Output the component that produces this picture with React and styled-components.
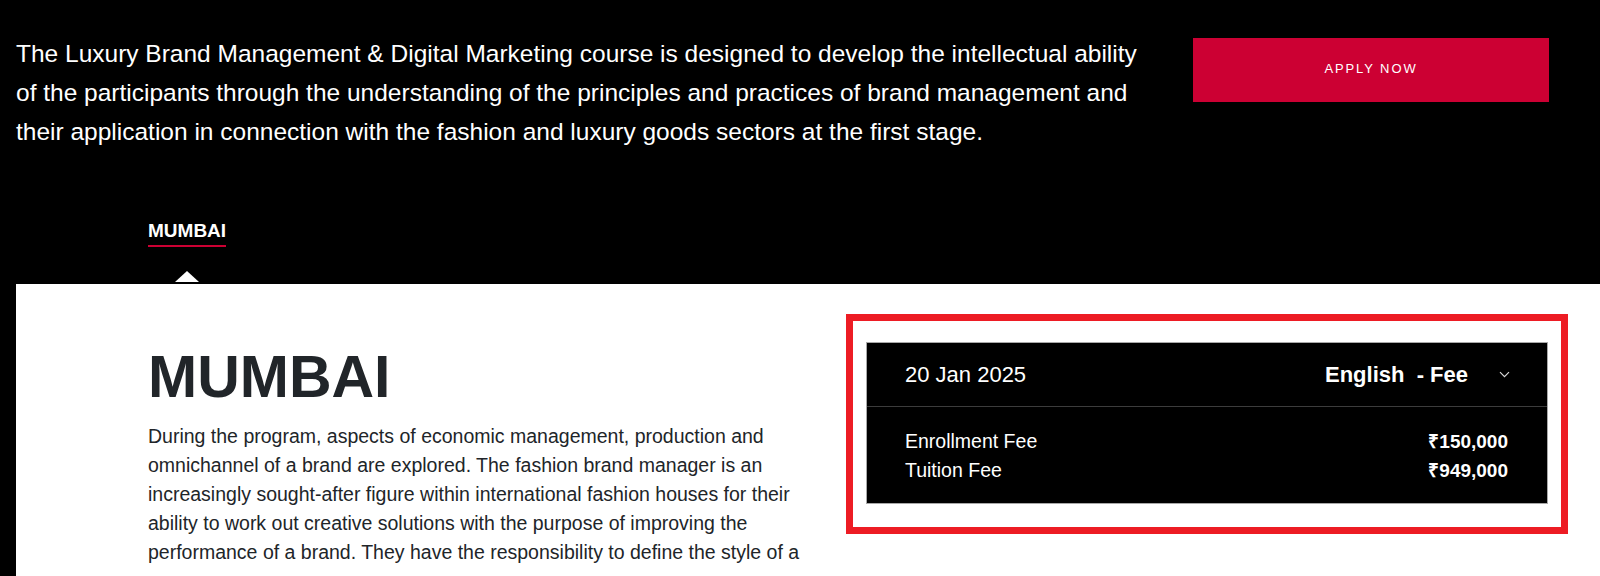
import React from 'react';
import styled, { createGlobalStyle } from 'styled-components';

const GlobalStyle = createGlobalStyle`
  * {
    box-sizing: border-box;
  }

  body {
    margin: 0;
    background: #000;
    font-family: "Liberation Sans", Arial, Helvetica, sans-serif;
  }
`;

const Page = styled.div`
  background: #000;
  min-height: 576px;
  overflow: hidden;
`;

const Hero = styled.section`
  display: flex;
  justify-content: space-between;
  align-items: flex-start;
  padding: 34px 51px 0 16px;
`;

const HeroText = styled.p`
  margin: 0;
  width: 1140px;
  color: #fff;
  font-size: 24.5px;
  line-height: 39px;
`;

const ApplyButton = styled.button`
  flex: none;
  width: 356px;
  height: 64px;
  margin-top: 4px;
  padding: 0 0 3px;
  border: none;
  background: #cc0033;
  color: #fff;
  font-family: inherit;
  font-size: 13px;
  letter-spacing: 1.9px;
  text-transform: uppercase;
  cursor: pointer;
`;

const Tabs = styled.nav`
  display: flex;
  padding: 69px 0 37px 148px;
`;

const Tab = styled.span`
  position: relative;
  color: #fff;
  font-size: 19px;
  font-weight: bold;
  line-height: 22px;
  padding-bottom: 3px;
  border-bottom: 2px solid ${(p) => (p.active ? '#cc0033' : 'transparent')};

  &::after {
    content: '';
    display: ${(p) => (p.active ? 'block' : 'none')};
    position: absolute;
    left: 50%;
    top: calc(100% + 26px);
    transform: translateX(-50%);
    border-left: 12px solid transparent;
    border-right: 12px solid transparent;
    border-bottom: 11px solid #fff;
  }
`;

const Content = styled.section`
  display: grid;
  grid-template-columns: 660px 722px;
  column-gap: 38px;
  align-items: start;
  margin-left: 16px;
  min-height: 292px;
  padding: 30px 32px 0 132px;
  background: #fff;
`;

const Intro = styled.div`
  padding-top: 30px;
  color: #212529;
`;

const CityTitle = styled.h2`
  margin: 0;
  font-size: 59px;
  font-weight: bold;
  line-height: 66px;
`;

const Description = styled.p`
  margin: 12px 0 0;
  font-size: 19.5px;
  line-height: 29px;
`;

const FeeFrame = styled.div`
  border: 7px solid #ed1c24;
  padding: 21px 13px 23px;
`;

const FeeCard = styled.div`
  background: #000;
  border: 1px solid #a8a8a8;
  color: #fff;
`;

const CardHeader = styled.div`
  display: flex;
  justify-content: space-between;
  align-items: center;
  height: 64px;
  padding: 0 37px 0 38px;
  border-bottom: 1px solid #3c3c3c;
`;

const StartDate = styled.span`
  font-size: 22px;
`;

const LanguageSelect = styled.div`
  display: flex;
  align-items: center;
  gap: 31px;
  font-size: 22px;
  font-weight: bold;
  white-space: pre;
`;

const FeeList = styled.div`
  padding: 20px 39px 18px 38px;
`;

const FeeRow = styled.div`
  display: flex;
  justify-content: space-between;
  font-size: 19.5px;
  line-height: 29px;
`;

const FeeValue = styled.span`
  font-size: 19px;
  font-weight: bold;
`;

const Chevron = () => (
  <svg width="11" height="7" viewBox="0 0 11 7" fill="none">
    <path d="M1 1.2l4.5 4.5 4.5-4.5" stroke="#d8d8d8" strokeWidth="1.2" />
  </svg>
);

const fees = [
  { label: 'Enrollment Fee', value: '₹150,000' },
  { label: 'Tuition Fee', value: '₹949,000' },
];

const App = () => {
  return (
    <Page>
      <GlobalStyle />
      <Hero>
        <HeroText>
          The Luxury Brand Management &amp; Digital Marketing course is designed to develop the
          intellectual ability of the participants through the understanding of the principles and
          practices of brand management and their application in connection with the fashion and
          luxury goods sectors at the first stage.
        </HeroText>
        <ApplyButton>Apply Now</ApplyButton>
      </Hero>

      <Tabs>
        <Tab active>MUMBAI</Tab>
      </Tabs>

      <Content>
        <Intro>
          <CityTitle>MUMBAI</CityTitle>
          <Description>
            During the program, aspects of economic management, production and omnichannel of a
            brand are explored. The fashion brand manager is an increasingly sought-after figure
            within international fashion houses for their ability to work out creative solutions
            with the purpose of improving the performance of a brand. They have the responsibility
            to define the style of a
          </Description>
        </Intro>

        <FeeFrame>
          <FeeCard>
            <CardHeader>
              <StartDate>20 Jan 2025</StartDate>
              <LanguageSelect>
                <span>{'English  - Fee'}</span>
                <Chevron />
              </LanguageSelect>
            </CardHeader>
            <FeeList>
              {fees.map((fee) => (
                <FeeRow key={fee.label}>
                  <span>{fee.label}</span>
                  <FeeValue>{fee.value}</FeeValue>
                </FeeRow>
              ))}
            </FeeList>
          </FeeCard>
        </FeeFrame>
      </Content>
    </Page>
  );
};

export default App;
